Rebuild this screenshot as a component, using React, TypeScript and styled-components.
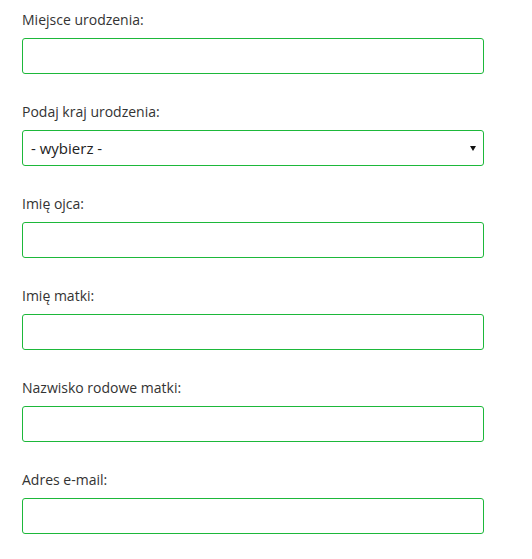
import React from "react";
import styled, { createGlobalStyle } from "styled-components";

const Global = createGlobalStyle`
  html, body { margin: 0; padding: 0; background: #fff; }
  body { font-family: "Open Sans", "Liberation Sans", sans-serif; }
`;

const Form = styled.form`
  display: flex;
  flex-direction: column;
  gap: 28px;
  padding: 10px 48px 0 22px;
  width: 462px;
`;

const Group = styled.div`
  display: flex;
  flex-direction: column;
  gap: 8px;
`;

const Label = styled.label`
  font-size: 14px;
  line-height: 20px;
  color: #333;
`;

const Input = styled.input`
  box-sizing: border-box;
  width: 462px;
  height: 36px;
  margin: 0;
  border: 1px solid #1db83a;
  border-radius: 3px;
  background: #fff;
  outline: none;
  padding: 0 8px;
  font-family: inherit;
  font-size: 15px;
`;

const SelectBox = styled.div`
  box-sizing: border-box;
  width: 462px;
  height: 36px;
  border: 1px solid #1db83a;
  border-radius: 3px;
  background: #fff;
  display: flex;
  align-items: center;
  justify-content: space-between;
  padding: 0 7px 0 8px;
  font-size: 15px;
  color: #222;
`;

const Arrow = styled.span`
  width: 0;
  height: 0;
  border-left: 3px solid transparent;
  border-right: 3px solid transparent;
  border-top: 5px solid #111;
  margin-top: 1px;
`;

const fields = [
  "Miejsce urodzenia:",
  "Podaj kraj urodzenia:",
  "Imię ojca:",
  "Imię matki:",
  "Nazwisko rodowe matki:",
  "Adres e-mail:",
];

export default function App() {
  return (
    <>
      <Global />
      <Form>
        {fields.map((f, i) => (
          <Group key={f}>
            <Label>{f}</Label>
            {i === 1 ? (
              <SelectBox>
                <span>- wybierz -</span>
                <Arrow />
              </SelectBox>
            ) : (
              <Input type="text" />
            )}
          </Group>
        ))}
      </Form>
    </>
  );
}
